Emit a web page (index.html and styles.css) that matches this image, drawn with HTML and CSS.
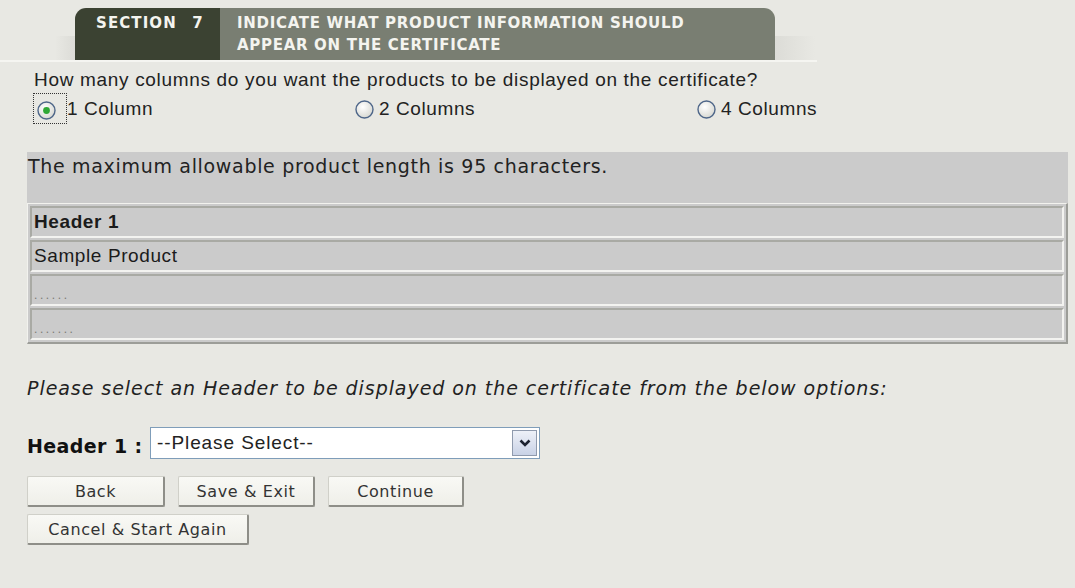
FILE: index.html
```html
<!DOCTYPE html>
<html>
<head>
<meta charset="utf-8">
<link rel="stylesheet" href="styles.css">
</head>
<body>
<div class="tabwrap">
  <div class="tab">
    <div class="tab-num">SECTION 7</div>
    <div class="tab-title">INDICATE WHAT PRODUCT INFORMATION SHOULD<br>APPEAR ON THE CERTIFICATE</div>
  </div>
</div>

<div class="question">How many columns do you want the products to be displayed on the certificate?</div>
<div class="radios">
  <label class="opt">
    <span class="focus"><svg class="radio" width="19" height="19" viewBox="0 0 19 19"><defs><radialGradient id="rg1" cx="40%" cy="35%" r="70%"><stop offset="0" stop-color="#ffffff"/><stop offset="1" stop-color="#d5d6d0"/></radialGradient></defs><circle cx="9.5" cy="9.5" r="8.5" fill="url(#rg1)" stroke="#4e6689" stroke-width="1.4"/><circle cx="9.5" cy="9.5" r="3.4" fill="#2fa836"/></svg></span><span class="opt-text">1 Column</span>
  </label>
  <label class="opt">
    <svg class="radio" width="19" height="19" viewBox="0 0 19 19"><defs><radialGradient id="rg2" cx="40%" cy="35%" r="70%"><stop offset="0" stop-color="#ffffff"/><stop offset="1" stop-color="#d5d6d0"/></radialGradient></defs><circle cx="9.5" cy="9.5" r="8.5" fill="url(#rg2)" stroke="#4e6689" stroke-width="1.4"/></svg><span class="opt-text">2 Columns</span>
  </label>
  <label class="opt">
    <svg class="radio" width="19" height="19" viewBox="0 0 19 19"><defs><radialGradient id="rg3" cx="40%" cy="35%" r="70%"><stop offset="0" stop-color="#ffffff"/><stop offset="1" stop-color="#d5d6d0"/></radialGradient></defs><circle cx="9.5" cy="9.5" r="8.5" fill="url(#rg3)" stroke="#4e6689" stroke-width="1.4"/></svg><span class="opt-text">4 Columns</span>
  </label>
</div>

<div class="info">
  <div class="info-text">The maximum allowable product length is 95 characters.</div>
  <table class="preview">
    <tr><td class="hdr">Header 1</td></tr>
    <tr><td>Sample Product</td></tr>
    <tr><td class="dots">......</td></tr>
    <tr><td class="dots">.......</td></tr>
  </table>
</div>

<div class="prompt">Please select an Header to be displayed on the certificate from the below options:</div>

<div class="field">
  <span class="field-label">Header 1 :</span>
  <div class="select">
    <span class="select-text">--Please Select--</span>
    <span class="arrow"><svg width="12" height="9" viewBox="0 0 12 9"><path d="M1.5 1.5 L6 6 L10.5 1.5" fill="none" stroke="#1c2230" stroke-width="2.6"/></svg></span>
  </div>
</div>

<div class="buttons">
  <div class="btn-row">
    <button class="btn btn-back">Back</button>
    <button class="btn btn-save">Save &amp; Exit</button>
    <button class="btn btn-cont">Continue</button>
  </div>
  <div class="btn-row">
    <button class="btn btn-cancel">Cancel &amp; Start Again</button>
  </div>
</div>
</body>
</html>
```

FILE: styles.css
```css
html, body {
  margin: 0;
  padding: 0;
}
body {
  background: #e8e8e3;
  font-family: "Liberation Sans", Arial, sans-serif;
  color: #1b1b1b;
  width: 1075px;
  height: 588px;
  overflow: hidden;
}

/* Section tab */
.tabwrap {
  width: 817px;
  box-sizing: border-box;
  padding: 8px 0 0 75px;
  border-bottom: 2px solid #f5f5f1;
  background: linear-gradient(to right, #e8e8e3 0, #e8e8e3 55px, #dcdcd7 75px, #e8e8e3 75px, #e8e8e3 700px, #dcdcd7 775px, #e8e8e3 815px);
  background-size: 100% 24px;
  background-position: 0 100%;
  background-repeat: no-repeat;
}
.tab {
  display: flex;
  width: 700px;
  height: 52px;
  border-radius: 11px 11px 0 0;
  overflow: hidden;
  font-family: "DejaVu Sans", Verdana, sans-serif;
  font-weight: bold;
  font-size: 15px;
  letter-spacing: 0.7px;
  line-height: 22px;
  color: #f4f4ef;
}
.tab-num {
  background: #3b4232;
  width: 145px;
  box-sizing: border-box;
  padding: 4px 0 0 21px;
  word-spacing: 9px;
  letter-spacing: 1.1px;
}
.tab-title {
  background: #797e72;
  flex: 1;
  padding: 4px 0 0 17px;
}

/* Question + radios */
.question {
  margin: 8px 0 0 34px;
  font-size: 19px;
  letter-spacing: 0.68px;
  line-height: 20px;
  color: #222;
}
.radios {
  display: grid;
  grid-template-columns: 322px 342px auto;
  margin: 3px 0 0 33px;
  height: 31px;
  font-size: 19px;
  letter-spacing: 0.6px;
  color: #222;
}
.opt {
  display: flex;
  align-items: center;
}
.focus {
  display: flex;
  align-items: center;
  border: 1px dotted #333;
  padding: 2px 0 0 3px;
  box-sizing: border-box;
  width: 34px;
  height: 31px;
}
.opt .radio {
  display: block;
  flex: none;
  margin-top: 2px;
}
.opt > .radio {
  margin-right: 5px;
}
.opt-text {
  padding-top: 1px;
}

/* Info box */
.info {
  margin: 28px 0 0 27px;
  width: 1041px;
  background: #cbcbcb;
  padding-top: 3px;
}
.info-text {
  font-family: "DejaVu Sans", Verdana, sans-serif;
  font-size: 19px;
  letter-spacing: 0.68px;
  line-height: 22px;
  padding-left: 1px;
  height: 48px;
  color: #222;
}
.preview {
  width: 100%;
  border-collapse: separate;
  border-spacing: 2px;
  border-style: solid;
  border-width: 1px 2px 2px 1px;
  border-color: #f2f2ee #9c9d98 #9c9d98 #f2f2ee;
  background: #cbcbcb;
}
.preview td {
  height: 32px;
  box-sizing: border-box;
  border-style: solid;
  border-width: 2px;
  border-color: #a9aaa4 #f3f3f0 #f3f3f0 #a9aaa4;
  padding: 0 2px;
  font-size: 19px;
  letter-spacing: 0.6px;
  color: #1b1b1b;
}
.preview td.hdr {
  font-weight: bold;
}
.preview td.dots {
  vertical-align: bottom;
  font-size: 12px;
  line-height: 14px;
  color: #7a7a75;
  padding-bottom: 2px;
  letter-spacing: 2.6px;
}

/* Prompt */
.prompt {
  margin: 33px 0 0 27px;
  font-family: "DejaVu Sans", Verdana, sans-serif;
  font-style: italic;
  font-size: 19px;
  letter-spacing: 0.95px;
  line-height: 22px;
  color: #222;
}

.field {
  display: flex;
  align-items: center;
  margin: 28px 0 0 27px;
}
.field-label {
  font-family: "DejaVu Sans", Verdana, sans-serif;
  font-weight: bold;
  font-size: 19px;
  letter-spacing: 0.4px;
  color: #111;
  width: 123px;
  padding-top: 6px;
}
.select {
  display: flex;
  align-items: center;
  justify-content: space-between;
  width: 390px;
  height: 32px;
  box-sizing: border-box;
  border: 1px solid #7f9db9;
  background: #fff;
  padding: 0 2px 0 6px;
}
.select-text {
  font-size: 19px;
  letter-spacing: 0.9px;
  color: #222;
}
.arrow {
  display: flex;
  align-items: center;
  justify-content: center;
  width: 25px;
  height: 26px;
  box-sizing: border-box;
  border: 1px solid #8f9aad;
  background: linear-gradient(#eef1f8, #c9d2e6);
}

/* Buttons */
.buttons {
  margin: 17px 0 0 27px;
  display: flex;
  flex-direction: column;
  gap: 7px;
}
.btn-row {
  display: flex;
  gap: 13px;
}
.btn {
  height: 31px;
  box-sizing: border-box;
  font-family: "DejaVu Sans", Tahoma, sans-serif;
  font-size: 16px;
  letter-spacing: 0.6px;
  color: #333;
  background: linear-gradient(#f9f9f5, #efefe9);
  border-style: solid;
  border-width: 1px 2px 2px 1px;
  border-color: #d0d0c9 #8e8e88 #8e8e88 #d0d0c9;
  border-radius: 2px;
  padding: 0;
}
.btn-back { width: 138px; }
.btn-save { width: 137px; }
.btn-cont { width: 136px; }
.btn-cancel { width: 222px; }
```
